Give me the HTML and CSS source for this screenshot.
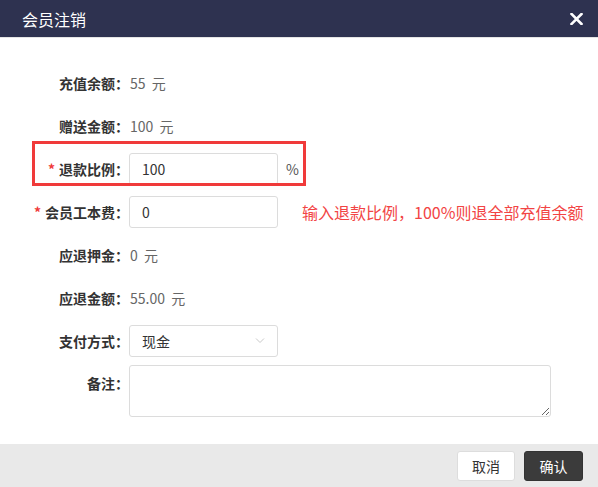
FILE: index.html
```html
<!DOCTYPE html>
<html lang="zh-CN">
<head>
  <meta charset="UTF-8">
  <meta name="viewport" content="width=device-width, initial-scale=1.0">
  <title>会员注销</title>
  <link rel="stylesheet" href="styles.css">
</head>
<body>
  <div class="dialog">
    <header class="dlg-head">
      <h1>会员注销</h1>
      <svg class="close" width="13" height="12" viewBox="0 0 13 12"><path d="M1.5 1l10 10M11.5 1l-10 10" stroke="#fff" stroke-width="2.6" stroke-linecap="square"/></svg>
    </header>
    <main class="dlg-body">
      <div class="row">
        <label class="lbl">充值余额：</label>
        <span class="val">55&nbsp;&nbsp;元</span>
      </div>
      <div class="row">
        <label class="lbl">赠送金额：</label>
        <span class="val">100&nbsp;&nbsp;元</span>
      </div>
      <div class="row mark">
        <label class="lbl"><i>*</i>退款比例：</label>
        <input class="ipt" type="text" value="100">
        <span class="unit">%</span>
        <div class="highlight"></div>
      </div>
      <div class="row">
        <label class="lbl"><i>*</i>会员工本费：</label>
        <input class="ipt" type="text" value="0">
        <span class="tip">输入退款比例，100%则退全部充值余额</span>
      </div>
      <div class="row">
        <label class="lbl">应退押金：</label>
        <span class="val">0&nbsp;&nbsp;元</span>
      </div>
      <div class="row">
        <label class="lbl">应退金额：</label>
        <span class="val">55.00&nbsp;&nbsp;元</span>
      </div>
      <div class="row">
        <label class="lbl">支付方式：</label>
        <div class="sel">
          <span>现金</span>
          <svg width="10" height="6" viewBox="0 0 10 6"><path d="M1 0.5l4 4 4-4" fill="none" stroke="#c8c8c8" stroke-width="1"/></svg>
        </div>
      </div>
      <div class="row memo">
        <label class="lbl">备注：</label>
        <textarea class="area"></textarea>
      </div>
    </main>
    <footer class="dlg-foot">
      <button class="btn">取消</button>
      <button class="btn primary">确认</button>
    </footer>
  </div>
</body>
</html>
```

FILE: styles.css
```css
body {
  margin: 0;
  font-family: "Noto Sans CJK SC", "Liberation Sans", sans-serif;
  color: #333;
  background: #fff;
}
.dialog {
  width: 598px;
  height: 487px;
  display: flex;
  flex-direction: column;
}
.dlg-head {
  height: 37px;
  background: #2e3250;
  border-bottom: 1px solid #e4e4e4;
  display: flex;
  align-items: center;
  justify-content: space-between;
  padding: 0 15px 0 22px;
}
.dlg-head h1 {
  margin: 0;
  font-size: 16px;
  font-weight: normal;
  color: #fff;
}
.close {
  display: block;
  margin-top: 1px;
}
.dlg-body {
  flex: 1;
  padding-top: 29px;
}
.row {
  position: relative;
  display: flex;
  align-items: center;
  height: 32px;
  margin-bottom: 11px;
  font-size: 14px;
}
.lbl {
  width: 129px;
  flex: none;
  text-align: right;
  font-weight: bold;
  color: #333;
}
.lbl i {
  font-style: normal;
  color: #f03a3a;
  margin-right: 4px;
}
.val {
  color: #666;
  padding-left: 1px;
}
.ipt {
  width: 149px;
  height: 32px;
  box-sizing: border-box;
  border: 1px solid #dcdcdc;
  border-radius: 3px;
  padding: 0 12px;
  font: inherit;
  font-size: 14px;
  color: #333;
  outline: none;
}
.unit {
  margin-left: 8px;
  color: #555;
}
.highlight {
  position: absolute;
  left: 32px;
  top: -12px;
  width: 274px;
  height: 45px;
  box-sizing: border-box;
  border: 3px solid #f03a3a;
}
.tip {
  margin-left: 24px;
  font-size: 16px;
  color: #f24444;
}
.sel {
  width: 149px;
  height: 32px;
  box-sizing: border-box;
  border: 1px solid #dcdcdc;
  border-radius: 3px;
  padding: 0 12px 0 12px;
  display: flex;
  align-items: center;
  justify-content: space-between;
}
.memo {
  height: 52px;
  margin-top: -3px;
  align-items: flex-start;
}
.memo .lbl {
  padding-top: 8px;
}
.area {
  width: 422px;
  height: 52px;
  box-sizing: border-box;
  border: 1px solid #dcdcdc;
  border-radius: 3px;
  margin: 0;
  resize: vertical;
}
.dlg-foot {
  height: 43px;
  background: #e9e9e9;
  display: flex;
  justify-content: flex-end;
  align-items: flex-start;
  gap: 9px;
  padding: 7px 15px 0 0;
  box-sizing: border-box;
}
.btn {
  width: 58px;
  height: 30px;
  border: 1px solid #ddd;
  border-radius: 3px;
  background: #fff;
  color: #333;
  font: inherit;
  font-size: 14px;
  cursor: pointer;
}
.btn.primary {
  width: 59px;
  background: #3b3b3b;
  border-color: #333;
  color: #fff;
}
```
